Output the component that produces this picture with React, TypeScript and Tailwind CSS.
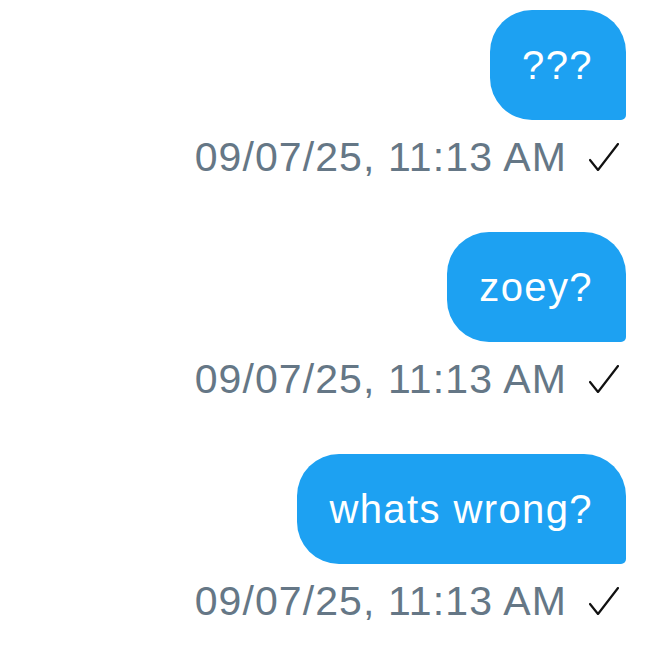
import React from 'react';

type Msg = { id: number; text: string; time: string };

const messages: Msg[] = [
    { id: 1, text: '???', time: '09/07/25, 11:13 AM' },
    { id: 2, text: 'zoey?', time: '09/07/25, 11:13 AM' },
    { id: 3, text: 'whats wrong?', time: '09/07/25, 11:13 AM' },
];

const Check = () => (
    <svg width="30" height="28" viewBox="0 0 30 28" fill="none" className="shrink-0">
        <polyline points="1,17 9,27 29,1" stroke="#111" strokeWidth="2.2" strokeLinecap="round" strokeLinejoin="round" />
    </svg>
);

const App = () => {
    return (
        <div className="w-[661px] h-[661px] bg-white overflow-hidden flex flex-col items-end pt-[10px] pr-[35px]" style={{ fontFamily: '"Liberation Sans", Arial, sans-serif' }}>
            {messages.map((m) => (
                <div key={m.id} className="flex flex-col items-end mb-[51px]">
                    <div className="h-[110px] flex items-center pl-[32px] pr-[33px] bg-[#1da1f2] text-white text-[40px] rounded-[42px] rounded-br-[5px] tracking-[1.4px]">
                        {m.text}
                    </div>
                    <div className="flex items-center gap-[22px] mt-[13px] h-[48px] pr-[7px]">
                        <span className="text-[41px] text-[#657786] leading-none tracking-[1.1px]">{m.time}</span>
                        <Check />
                    </div>
                </div>
            ))}
        </div>
    );
};

export default App;
